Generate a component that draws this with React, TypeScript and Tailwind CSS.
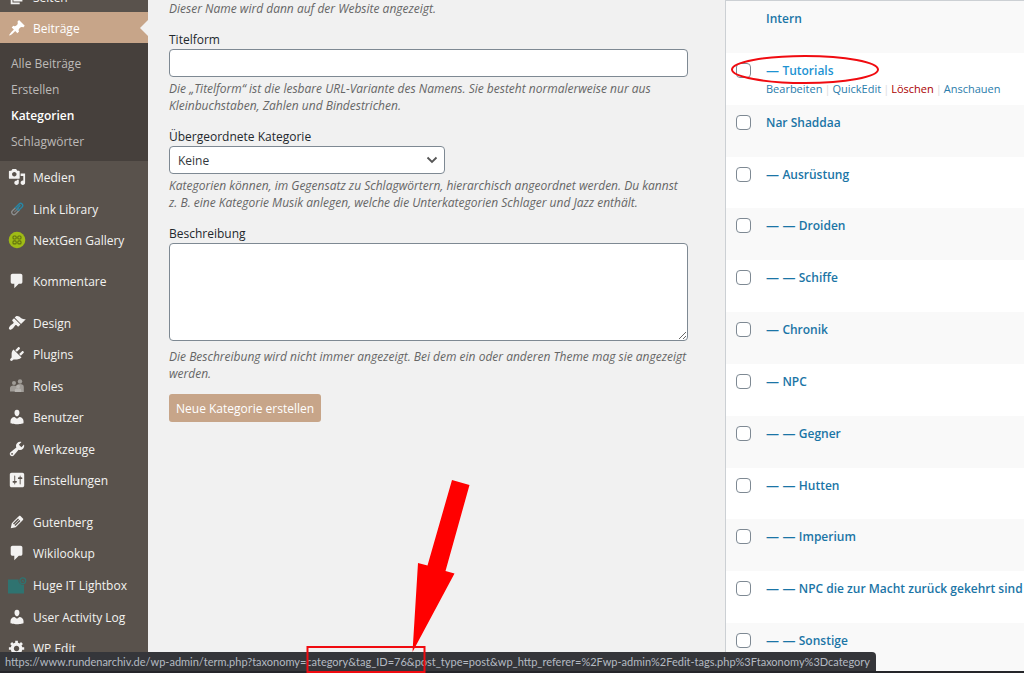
import type { ReactNode } from 'react';

const PATHS = {
  page: 'M6 15V2h10v13H6zm-1 1h8v2H3V5h2v11z',
  post: 'M10.44 3.02l1.82-1.82 6.36 6.35-1.83 1.82c-1.05-.68-2.48-.57-3.41.36l-.75.75c-.92.93-1.04 2.35-.35 3.41l-1.83 1.82-2.41-2.41-2.8 2.79c-.42.42-3.38 2.71-3.8 2.29s1.86-3.39 2.28-3.81l2.79-2.79L4.1 9.36l1.83-1.82c1.05.69 2.48.57 3.4-.36l.75-.75c.93-.92 1.05-2.35.36-3.41z',
  media:
    'M13 11V4c0-.55-.45-1-1-1h-1.67L9 1H5L3.67 3H2c-.55 0-1 .45-1 1v7c0 .55.45 1 1 1h10c.55 0 1-.45 1-1zM7 4.5c1.38 0 2.5 1.12 2.5 2.5S8.38 9.5 7 9.5 4.5 8.38 4.5 7 5.62 4.5 7 4.5zM14 6h5v10.5c0 1.38-1.12 2.5-2.5 2.5S14 17.88 14 16.5s1.12-2.5 2.5-2.5c.17 0 .34.02.5.05V9h-3V6zm-4 8.05V13h2v3.5c0 1.38-1.12 2.5-2.5 2.5S7 17.88 7 16.5 8.12 14 9.5 14c.17 0 .34.02.5.05z',
  comments: 'M5 2h9c1.1 0 2 .9 2 2v7c0 1.1-.9 2-2 2h-2l-5 5v-5H5c-1.1 0-2-.9-2-2V4c0-1.1.9-2 2-2z',
  appearance:
    'M14.48 11.06L7.41 3.99l1.5-1.5c.5-.56 2.3-.47 3.51.32 1.21.8 1.43 1.28 2.91 2.1 1.18.64 2.45 1.26 4.45.85zm-.71.71L6.7 4.7 4.93 6.47c-.39.39-.39 1.02 0 1.41l1.06 1.06c.39.39.39 1.03 0 1.42-.6.6-1.43 1.11-2.21 1.69-.35.26-.7.53-1.01.84C1.43 14.23.4 16.08 1.4 17.07c.99 1 2.84-.03 4.18-1.36.31-.31.58-.66.85-1.02.57-.78 1.08-1.61 1.69-2.21.39-.39 1.02-.39 1.41 0l1.06 1.06c.39.39 1.02.39 1.41 0z',
  plugins:
    'M13.11 4.36L9.87 7.6 8 5.73l3.24-3.24c.35-.34 1.05-.2 1.56.32.52.51.66 1.21.31 1.55zm-8 1.77l.91-1.12 9.01 9.01-1.19.84c-.71.71-2.63 1.16-3.82 1.16H6.14L4.9 17.26c-.59.59-1.54.59-2.12 0-.59-.58-.59-1.53 0-2.12l1.24-1.24v-3.88c0-1.13.4-3.19 1.09-3.89zm7.26 3.97l3.24-3.24c.34-.35 1.04-.21 1.55.31.52.51.66 1.21.31 1.55l-3.24 3.25z',
  users:
    'M10 9.25c-2.27 0-2.73-3.44-2.73-3.44C7 4.02 7.82 2 9.97 2c2.16 0 2.98 2.02 2.71 3.81 0 0-.41 3.44-2.68 3.44zm0 2.57L12.72 10c2.39 0 4.52 2.33 4.52 4.53v2.49s-3.65 1.13-7.24 1.13c-3.65 0-7.24-1.13-7.24-1.13v-2.49c0-2.25 1.94-4.48 4.47-4.48z',
  tools:
    'M16.68 9.77c-1.34 1.34-3.3 1.67-4.95.99l-5.41 6.52c-.99.99-2.59.99-3.58 0s-.99-2.59 0-3.57l6.52-5.42c-.68-1.65-.35-3.61.99-4.95 1.28-1.28 3.12-1.62 4.72-1.06l-2.89 2.89 2.82 2.82 2.86-2.87c.53 1.58.18 3.39-1.08 4.65zM3.81 16.21c.4.39 1.04.39 1.43 0 .4-.4.4-1.04 0-1.43-.39-.4-1.03-.4-1.43 0-.39.39-.39 1.03 0 1.43z',
  settings:
    'M18 16V4c0-1.1-.9-2-2-2H4c-1.1 0-2 .9-2 2v12c0 1.1.9 2 2 2h12c1.1 0 2-.9 2-2zM8 11h1c.55 0 1 .45 1 1s-.45 1-1 1H8v1.5c0 .28-.22.5-.5.5s-.5-.22-.5-.5V13H6c-.55 0-1-.45-1-1s.45-1 1-1h1V5.5c0-.28.22-.5.5-.5s.5.22.5.5V11zm5-2h-1c-.55 0-1-.45-1-1s.45-1 1-1h1V5.5c0-.28.22-.5.5-.5s.5.22.5.5V7h1c.55 0 1 .45 1 1s-.45 1-1 1h-1v5.500c0 .28-.22.5-.5.5s-.5-.22-.5-.5V9z',
  generic:
    'M18 12h-2.180c-.17.7-.44 1.350-.81 1.930l1.540 1.540-2.100 2.100-1.540-1.540c-.58.36-1.230.63-1.910.79V19H8v-2.180c-.68-.16-1.330-.43-1.910-.79l-1.540 1.540-2.120-2.120 1.540-1.540c-.36-.58-.63-1.230-.79-1.910H1V9.030h2.170c.16-.7.44-1.350.8-1.940L2.430 5.550l2.100-2.100 1.540 1.540c.58-.37 1.240-.64 1.930-.81V2h3v2.180c.68.16 1.330.43 1.910.79l1.540-1.540 2.120 2.120-1.540 1.540c.36.59.64 1.240.8 1.940H18V12zm-8.500 1.500c1.660 0 3-1.340 3-3s-1.340-3-3-3-3 1.340-3 3 1.340 3 3 3z',
  edit: 'M13.89 3.39l2.71 2.72c.46.46.42 1.24.03 1.64l-8.01 8.02-5.56 1.16 1.16-5.58s7.6-7.63 7.99-8.03c.39-.39 1.22-.39 1.68.07zm-2.73 2.79l-5.59 5.61 1.11 1.11 5.54-5.65zm-2.97 8.23l5.58-5.6-1.07-1.08-5.59 5.6z',
};

function Dashicon({ name }: { name: keyof typeof PATHS }) {
  return (
    <svg viewBox="0 0 20 20" className="size-[18px]" fill="currentColor" aria-hidden="true">
      <path fillRule="evenodd" d={PATHS[name]} />
    </svg>
  );
}

function LinkLibraryIcon() {
  return (
    <svg viewBox="0 0 18 18" className="size-[18px]" fill="none" strokeWidth="1.3" aria-hidden="true">
      <g transform="rotate(-45 9 9)">
        <path d="M9 7H4.500a2 2 0 0 0 0 4.500H10" stroke="#8b8d8e" />
        <path d="M5 9.200h6" stroke="#77797a" />
        <path d="M8 7h6a2 2 0 0 1 0 4.200h-4.500a1.500 1.500 0 0 1 0-2.400H14" stroke="#2688a8" />
      </g>
    </svg>
  );
}

function NextGenIcon() {
  return (
    <svg viewBox="0 0 18 18" className="size-[18px]" aria-hidden="true">
      <circle cx="9" cy="9" r="8.300" fill="#9fbb16" />
      <g fill="none" stroke="#61720f" strokeWidth="1.100">
        <rect x="5" y="5" width="3.200" height="3" rx="1" />
        <rect x="9.800" y="5" width="3.200" height="3" rx="1" />
        <rect x="5" y="9.900" width="3.200" height="3" rx="1" />
        <rect x="9.800" y="9.900" width="3.200" height="3" rx="1" />
      </g>
    </svg>
  );
}

function RolesIcon() {
  return (
    <svg viewBox="0 0 18 18" className="size-[18px]" fill="#a09c97" aria-hidden="true">
      <circle cx="6" cy="6" r="2" />
      <circle cx="12" cy="4.500" r="2.200" />
      <path d="M9.500 13V9.200c0-1.500 1-2.200 2.500-2.200 2 0 3.800.8 3.800 3V15h-4z" />
      <path d="M2 14.500V11c0-1.700 1.400-2.600 3.500-2.600S9 9 9.200 11v3.500z" />
      <circle cx="10" cy="9.500" r="1.900" fill="#b5b2ae" />
      <path d="M6.800 15v-1.500c0-1.500 1.200-2.200 3.200-2.200s3.200.8 3.200 2.200V15z" fill="#b5b2ae" />
    </svg>
  );
}

function LightboxIcon() {
  return (
    <svg viewBox="0 0 20 18" className="h-[18px] w-5" aria-hidden="true">
      <path d="M1 3.500h10.500a4.500 4.500 0 0 0 5.500 5V17.500H1z" fill="#2f7370" />
      <circle cx="15.800" cy="4.800" r="2.900" fill="none" stroke="#2f7370" strokeWidth="1.300" />
      <path d="M14.800 3.800l2 2m0-2l-2 2" stroke="#2f7370" strokeWidth="1" />
    </svg>
  );
}

type Item = { label: string; icon: ReactNode };

function MenuItem({ label, icon }: Item) {
  return (
    <li className="flex flex-1">
      <a href="#" className="flex flex-1 items-center text-[#f3f2f1]">
        <span className="flex w-[33px] shrink-0 justify-center">{icon}</span>
        <span className="pt-0.5">{label}</span>
      </a>
    </li>
  );
}

const CONTENT_ITEMS: Item[] = [
  { label: 'Medien', icon: <Dashicon name="media" /> },
  { label: 'Link Library', icon: <LinkLibraryIcon /> },
  { label: 'NextGen Gallery', icon: <NextGenIcon /> },
];
const ADMIN_ITEMS: Item[] = [
  { label: 'Design', icon: <Dashicon name="appearance" /> },
  { label: 'Plugins', icon: <Dashicon name="plugins" /> },
  { label: 'Roles', icon: <RolesIcon /> },
  { label: 'Benutzer', icon: <Dashicon name="users" /> },
  { label: 'Werkzeuge', icon: <Dashicon name="tools" /> },
  { label: 'Einstellungen', icon: <Dashicon name="settings" /> },
];
const EXTENSION_ITEMS: Item[] = [
  { label: 'Gutenberg', icon: <Dashicon name="edit" /> },
  { label: 'Wikilookup', icon: <Dashicon name="comments" /> },
  { label: 'Huge IT Lightbox', icon: <LightboxIcon /> },
  { label: 'User Activity Log', icon: <Dashicon name="users" /> },
  { label: 'WP Edit', icon: <Dashicon name="generic" /> },
];

function Sidebar() {
  return (
    <nav className="w-[148px] shrink-0 overflow-hidden bg-[#59524c] text-xs font-medium">
      <ul className="flex h-3 flex-col justify-end">
        <li className="flex h-[30px] shrink-0">
          <a href="#" className="flex flex-1 items-center text-[#f3f2f1]">
            <span className="flex w-[33px] justify-center">
              <Dashicon name="page" />
            </span>
            <span className="pt-0.5">Seiten</span>
          </a>
        </li>
      </ul>
      <a href="#" className="relative flex h-[31px] items-center bg-[#c7a589] text-white">
        <span className="flex w-[33px] justify-center">
          <Dashicon name="post" />
        </span>
        <span className="pt-0.5">Beiträge</span>
        <svg viewBox="0 0 8 16" className="absolute right-0 h-4 w-2" aria-hidden="true">
          <path d="M8 0v16L0 8z" fill="#f1f1f1" />
        </svg>
      </a>
      <ul className="bg-[#46403c] px-[11px] pb-1.5 pt-2 text-xs font-normal text-[#bdbab8]">
        {['Alle Beiträge', 'Erstellen', 'Kategorien', 'Schlagwörter'].map((label) => (
          <li key={label}>
            <a
              href="#"
              className={
                label === 'Kategorien' ? 'block font-semibold leading-[26px] text-white' : 'block leading-[26px]'
              }
            >
              {label}
            </a>
          </li>
        ))}
      </ul>
      <ul className="flex h-[95px] flex-col">
        {CONTENT_ITEMS.map((item) => (
          <MenuItem key={item.label} {...item} />
        ))}
      </ul>
      <ul className="mt-[9px] flex h-8 flex-col">
        <MenuItem label="Kommentare" icon={<Dashicon name="comments" />} />
      </ul>
      <ul className="mt-2.5 flex h-[189px] flex-col">
        {ADMIN_ITEMS.map((item) => (
          <MenuItem key={item.label} {...item} />
        ))}
      </ul>
      <ul className="mt-2.5 flex h-[158px] flex-col">
        {EXTENSION_ITEMS.map((item) => (
          <MenuItem key={item.label} {...item} />
        ))}
      </ul>
    </nav>
  );
}

const HINT = 'text-xs leading-[17px] italic text-[#666]';
const LABEL = 'block text-xs leading-[18px] text-[#23282d]';

function CategoryForm() {
  return (
    <form className="pl-[21px] pr-[37px]" onSubmit={(e) => e.preventDefault()}>
      <p className={HINT}>Dieser Name wird dann auf der Website angezeigt.</p>

      <div className="mt-3.5">
        <label htmlFor="slug" className={LABEL}>
          Titelform
        </label>
        <input
          id="slug"
          type="text"
          className="block h-7 w-full rounded border border-[#7e8993] bg-white px-2 text-xs"
        />
        <p className={`mt-[3px] ${HINT}`}>
          Die „Titelform“ ist die lesbare URL-Variante des Namens. Sie besteht normalerweise nur aus
          <br />
          Kleinbuchstaben, Zahlen und Bindestrichen.
        </p>
      </div>

      <div className="mt-3.5">
        <label htmlFor="parent" className={LABEL}>
          Übergeordnete Kategorie
        </label>
        <div className="relative w-[276px]">
          <select
            id="parent"
            className="block h-7 w-full appearance-none rounded border border-[#7e8993] bg-white px-2 pt-0.5 text-xs text-[#32373c]"
          >
            <option>Keine</option>
          </select>
          <svg
            viewBox="0 0 12 8"
            className="pointer-events-none absolute right-[7px] top-2.5 h-2 w-3"
            fill="none"
            stroke="#555"
            strokeWidth="1.8"
            aria-hidden="true"
          >
            <path d="M1.500 1.500L6 6l4.500-4.500" />
          </svg>
        </div>
        <p className={`mt-[3px] ${HINT}`}>
          Kategorien können, im Gegensatz zu Schlagwörtern, hierarchisch angeordnet werden. Du kannst
          <br />
          z. B. eine Kategorie Musik anlegen, welche die Unterkategorien Schlager und Jazz enthält.
        </p>
      </div>

      <div className="mt-3.5">
        <label htmlFor="description" className={LABEL}>
          Beschreibung
        </label>
        <textarea
          id="description"
          className="block h-[98px] w-full rounded border border-[#7e8993] bg-white px-2 py-1 text-xs"
        />
        <p className={`mt-[7px] ${HINT}`}>
          Die Beschreibung wird nicht immer angezeigt. Bei dem ein oder anderen Theme mag sie angezeigt
          <br />
          werden.
        </p>
      </div>

      <button type="submit" className="mt-3 h-7 rounded-[3px] bg-[#c7a589] px-[7px] pt-0.5 text-xs text-white">
        Neue Kategorie erstellen
      </button>
    </form>
  );
}

type Category = { name: string; depth: number; hovered?: boolean };

const CATEGORIES: Category[] = [
  { name: 'Intern', depth: 0 },
  { name: 'Tutorials', depth: 1, hovered: true },
  { name: 'Nar Shaddaa', depth: 0 },
  { name: 'Ausrüstung', depth: 1 },
  { name: 'Droiden', depth: 2 },
  { name: 'Schiffe', depth: 2 },
  { name: 'Chronik', depth: 1 },
  { name: 'NPC', depth: 1 },
  { name: 'Gegner', depth: 2 },
  { name: 'Hutten', depth: 2 },
  { name: 'Imperium', depth: 2 },
  { name: 'NPC die zur Macht zurück gekehrt sind', depth: 2 },
  { name: 'Sonstige', depth: 2 },
];

function RowActions() {
  return (
    <div className="flex gap-0.5 text-[11px] leading-[18px] text-[#ddd]">
      <a href="#" className="text-[#2a7cab]">
        Bearbeiten
      </a>
      |
      <a href="#" className="text-[#2a7cab]">
        QuickEdit
      </a>
      |
      <a href="#" className="text-[#a00]">
        Löschen
      </a>
      |
      <a href="#" className="text-[#2a7cab]">
        Anschauen
      </a>
    </div>
  );
}

function CategoryTable() {
  return (
    <div className="min-w-0 overflow-hidden border-l border-t border-[#ccd0d4] bg-white">
      <table className="h-[674px] w-full table-fixed whitespace-nowrap">
        <colgroup>
          <col className="w-10" />
          <col />
        </colgroup>
        <tbody>
          {CATEGORIES.map(({ name, depth, hovered }, i) => (
            <tr key={name} className="h-[51px] odd:bg-[#f9f9f9]">
              <td className="pl-2.5 pt-2.5 align-top">
                {i > 0 && (
                  <input
                    type="checkbox"
                    aria-label={`${name} auswählen`}
                    className="block size-[15px] appearance-none rounded border border-[#7e8993] bg-white"
                  />
                )}
              </td>
              <td className="pt-2 align-top">
                <a
                  href="#"
                  className={
                    hovered
                      ? 'block text-xs font-semibold leading-[18px] text-[#1d93d2]'
                      : 'block text-xs font-semibold leading-[18px] text-[#1b75a6]'
                  }
                >
                  <span className="text-[13px]">{'— '.repeat(depth)}</span>
                  {name}
                </a>
                {hovered && <RowActions />}
              </td>
            </tr>
          ))}
        </tbody>
      </table>
    </div>
  );
}

function Annotations() {
  return (
    <svg
      width="1024"
      height="673"
      viewBox="0 0 1024 673"
      className="pointer-events-none absolute left-0 top-0"
      fill="none"
      stroke="#f00b10"
      strokeWidth="2"
      aria-hidden="true"
    >
      <ellipse cx="805" cy="69.500" rx="73" ry="13.500" />
      <path d="M452 480l17.500 5-24 86 9 2.500-42 78.500 5.500-89 9.500 2.500z" fill="#f00" stroke="none" />
      <rect x="307.500" y="647" width="117" height="25" />
    </svg>
  );
}

export default function App() {
  return (
    <div className="relative flex h-screen overflow-hidden bg-[#f1f1f1] font-['Open_Sans','Noto_Sans',sans-serif]">
      <Sidebar />
      <main className="grid min-w-0 flex-1 grid-cols-[577fr_299fr]">
        <CategoryForm />
        <CategoryTable />
      </main>
      <div className="absolute inset-x-0 bottom-0 border-b-2 border-[#25262a]">
        <div className="h-[19px] w-fit whitespace-nowrap rounded-tr bg-[#35363a] pl-[5px] pr-1.5 font-['Lato',sans-serif] text-[11px] leading-[19px] text-[#b4bac2]">
          https://www.rundenarchiv.de/wp-admin/term.php?taxonomy=category&amp;tag_ID=76&amp;post_type=post&amp;wp_http_referer=%2Fwp-admin%2Fedit-tags.php%3Ftaxonomy%3Dcategory
        </div>
      </div>
      <Annotations />
    </div>
  );
}
